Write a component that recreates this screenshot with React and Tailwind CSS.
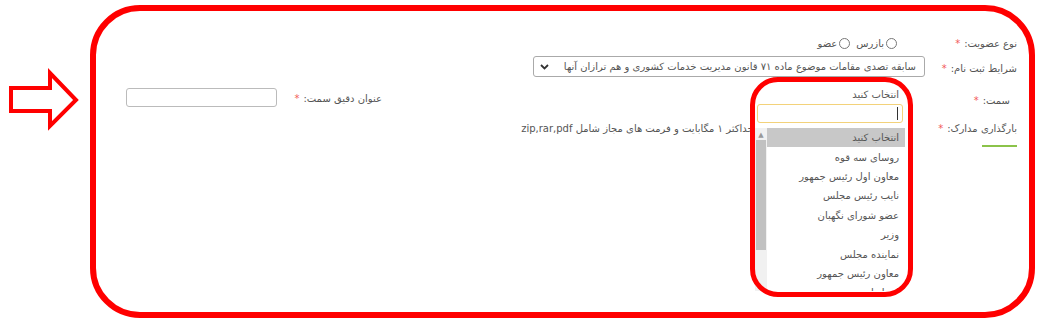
import React from "react";

const options = [
  "انتخاب کنید",
  "روسای سه قوه",
  "معاون اول رئیس جمهور",
  "نایب رئیس مجلس",
  "عضو شورای نگهبان",
  "وزیر",
  "نماینده مجلس",
  "معاون رئیس جمهور",
  "استاندار",
];

function Req() {
  return <span className="text-[#f25a5a] mr-[4px]">*</span>;
}

function Radio({ label }) {
  return (
    <label className="flex items-center gap-[2px]">
      <span className="w-[11px] h-[11px] rounded-full border border-[#777] bg-white" />
      <span>{label}</span>
    </label>
  );
}

function Dropdown() {
  return (
    <div className="absolute left-[755px] top-[86px] w-[150px] bg-white" dir="rtl">
      <div className="h-[17px] flex items-center pr-[6px]">انتخاب کنید</div>
      <div className="mx-[2px] mt-px h-[19px] border border-[#f3d27a] rounded-[3px] flex items-center pr-[4px]">
        <span className="w-px h-[13px] bg-[#333]" />
      </div>
      <div className="mt-[5px] h-[163px] flex overflow-hidden">
        <div className="flex-1 flex flex-col">
          {options.map((o, i) => (
            <div
              key={o}
              className={
                "h-[19.4px] shrink-0 flex items-center pr-[6px] " +
                (i === 0 ? "bg-[#c8c8c8]" : "")
              }
            >
              {o}
            </div>
          ))}
        </div>
        <div className="w-[12px] bg-[#f1f1f1] flex flex-col items-center">
          <span className="text-[7px] leading-[10px] text-[#999] mt-[2px]">▲</span>
          <span className="w-[10px] h-[110px] bg-[#c1c1c1]" />
        </div>
      </div>
    </div>
  );
}

export default function App() {
  return (
    <div
      className="relative w-[1048px] h-[325px] bg-white overflow-hidden text-[10px] text-[#555]"
      style={{ fontFamily: '"DejaVu Sans", Tahoma, sans-serif' }}
    >
      <div dir="rtl" className="pt-[33px] pr-[31px]">
        {/* نوع عضویت */}
        <div className="flex items-center h-[20px]">
          <div className="w-[92px] shrink-0">
            نوع عضویت:<Req />
          </div>
          <div className="mr-[28px] flex items-center gap-[6px]">
            <Radio label="بازرس" />
            <Radio label="عضو" />
          </div>
        </div>

        {/* شرایط ثبت نام */}
        <div className="flex items-center h-[21px] mt-[3px]">
          <div className="w-[92px] shrink-0 pt-[3px]">
            شرایط ثبت نام:<Req />
          </div>
          <div className="w-[392px] h-[21px] border border-[#aaa] rounded-[3px] flex items-center justify-between pr-[8px] pl-[6px]">
            <span className="whitespace-nowrap">سابقه تصدی مقامات موضوع ماده ۷۱ قانون مدیریت خدمات کشوری و هم ترازان آنها</span>
            <svg width="9" height="6" viewBox="0 0 9 6">
              <path d="M1 1l3.5 3.5L8 1" stroke="#333" strokeWidth="1.8" fill="none" />
            </svg>
          </div>
        </div>

        {/* سمت */}
        <div className="flex items-center h-[26px] mt-[7px]">
          <div className="w-[92px] shrink-0 pr-[7px] pt-[6px]">
            سمت:<Req />
          </div>
          <div className="w-[150px] mr-[20px] h-[20px]" />
          <div className="mr-[373px] w-[105px] shrink-0 pt-[3px]">
            عنوان دقیق سمت:<Req />
          </div>
          <input
            type="text"
            className="w-[151px] h-[19px] border border-[#bbb] rounded-[3px] bg-white"
          />
        </div>

        {/* بارگذاری مدارک */}
        <div className="flex items-center h-[24px] mt-[6px]">
          <div className="w-[92px] shrink-0">
            بارگذاری مدارک:<Req />
          </div>
          <div className="mr-[150px] whitespace-nowrap">
            فایل حداکثر ۱ مگابایت و فرمت های مجاز شامل zip,rar,pdf
          </div>
        </div>

        <div className="w-[35px] h-[2px] bg-[#8bc34a] mt-[5px]" />
      </div>

      <Dropdown />

      {/* annotations */}
      <svg className="absolute left-0 top-0" width="90" height="140" viewBox="0 0 90 140">
        <path
          d="M11 88 H50 V73 L76 100 L50 126 V111 H11 Z"
          fill="none"
          stroke="#ff0000"
          strokeWidth="4"
          strokeLinejoin="miter"
        />
      </svg>
      <div className="absolute left-[90px] top-[5px] w-[945px] h-[313px] rounded-[50px] border-[6px] border-[#ff0000]" />
      <div className="absolute left-[750px] top-[77px] w-[163px] h-[220px] rounded-[28px] border-[5px] border-[#ff0000]" />
    </div>
  );
}
